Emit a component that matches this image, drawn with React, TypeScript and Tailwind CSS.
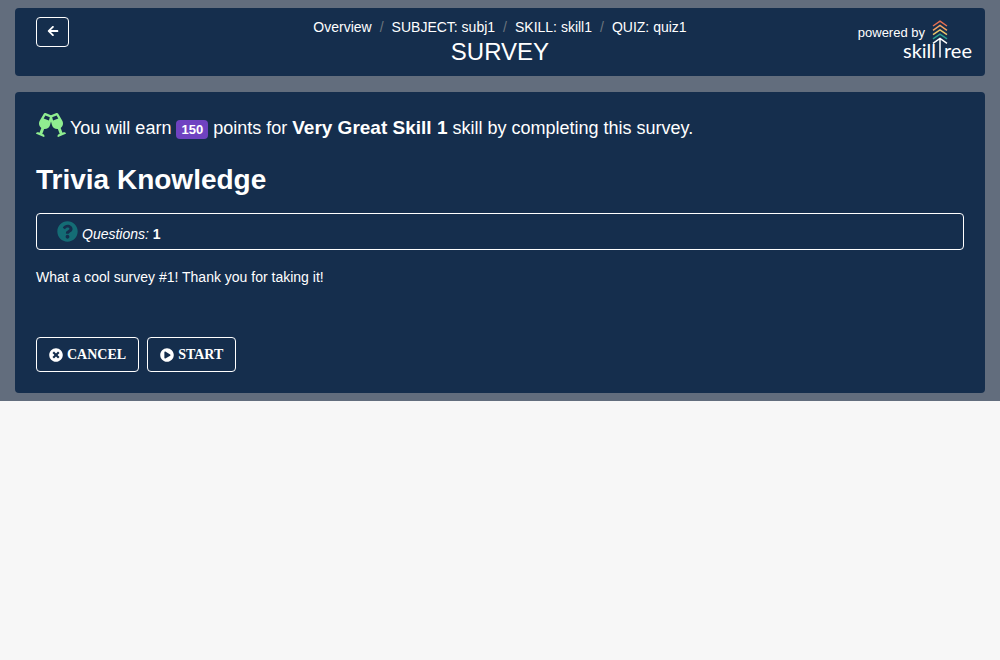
import { FaArrowLeft, FaGlassCheers, FaPlayCircle, FaQuestionCircle, FaTimesCircle } from 'react-icons/fa';

const crumbs = ['Overview', 'SUBJECT: subj1', 'SKILL: skill1', 'QUIZ: quiz1'];
const chevrons = ['#e76f51', '#f4a261', '#e9c46a', '#2a9d8f'];

function SkillTreeLogo() {
  return (
    <a href="#skilltree" aria-label="SkillTree" className="block h-12 w-[72px] text-white">
      <svg viewBox="0 0 72 48" className="h-12 w-[72px]" fill="none" strokeWidth="1.5" aria-hidden="true">
        {chevrons.map((color, i) => (
          <path key={color} d={`M31 ${6 + i * 4.3}L38 ${1.2 + i * 4.3}L45 ${6 + i * 4.3}`} stroke={color} />
        ))}
        <path d="M31 23.3L38 18.5L45 23.3M38 18.5V37.5" stroke="#fff" />
        <text x="1" y="38" fill="#fff" stroke="none" fontFamily="Lato, sans-serif" fontSize="20">skill</text>
        <text x="42" y="38" fill="#fff" stroke="none" fontFamily="Lato, sans-serif" fontSize="20">ree</text>
      </svg>
    </a>
  );
}

export default function App() {
  return (
    <div className="min-h-screen bg-[#f7f7f7] font-['Liberation_Sans',sans-serif] text-sm text-white">
      <div className="flex flex-col gap-4 bg-[#626d7d] px-[15px] py-2">
        <header className="grid grid-cols-[1fr_auto_1fr] rounded bg-[#152e4d] px-[11px]">
          <div className="pt-[9px] pl-[10px]">
            <button type="button" aria-label="Back" className="flex h-[30px] w-[33px] items-center justify-center rounded border border-white pb-0.5">
              <FaArrowLeft className="size-3" />
            </button>
          </div>
          <div className="pt-[9px] pb-[11px] text-center">
            <nav aria-label="Breadcrumb">
              <ol className="flex justify-center leading-[21px]">
                {crumbs.map((crumb, i) => (
                  <li key={crumb}>
                    {i > 0 && <span className="px-2 text-[#6c757d]">/</span>}
                    <a href="#overview">{crumb}</a>
                  </li>
                ))}
              </ol>
            </nav>
            <h1 className="text-2xl leading-[27px]">SURVEY</h1>
          </div>
          <div className="flex justify-end pt-3">
            <span className="-mr-[23px] pt-1 text-[13px] leading-[18px]">powered by</span>
            <SkillTreeLogo />
          </div>
        </header>
        <main className="rounded bg-[#152e4d] px-[21px] py-[21px]">
          <div className="flex items-start gap-1 text-lg">
            <FaGlassCheers className="h-6 w-[30px] text-[#90ee90]" />
            <p className="pt-px leading-7">
              You will earn{' '}
              <span className="inline-block rounded bg-[#6f42c1] px-[5px] text-[13px] leading-[19px] font-bold">150</span> points for{' '}
              <strong className="text-[19px]">Very Great Skill 1</strong> skill by completing this survey.
            </p>
          </div>
          <h2 className="mt-5 text-[28px] leading-9 font-bold">Trivia Knowledge</h2>
          <div className="mt-[15px] flex h-[37px] items-center gap-1 rounded-sm border border-white px-5">
            <FaQuestionCircle className="size-[21px] text-[#146c75]" />
            <span className="pt-1"><em>Questions:</em> <strong>1</strong></span>
          </div>
          <p className="mt-4 text-[14px] leading-[22px]">What a cool survey #1! Thank you for taking it!</p>
          <div className="mt-[49px] flex gap-2 font-['Liberation_Serif',serif] font-bold">
            <button type="button" className="flex h-[35px] items-center gap-1 rounded border border-white px-3">
              <FaTimesCircle className="size-3.5" />CANCEL
            </button>
            <button type="button" className="flex h-[35px] items-center gap-1 rounded border border-white px-3">
              <FaPlayCircle className="size-3.5" />START
            </button>
          </div>
        </main>
      </div>
    </div>
  );
}
